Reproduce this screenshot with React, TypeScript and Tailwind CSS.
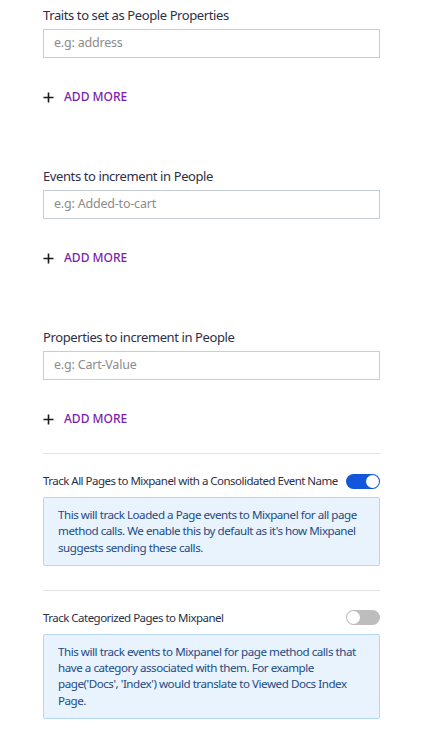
import React from "react";

function Section({ label, placeholder, first }: { label: string; placeholder: string; first?: boolean }) {
  return (
    <div className={first ? "" : "mt-[60px]"}>
      <div className="text-[13px] leading-[18px] tracking-[-0.4px] text-[#2b3049]">{label}</div>
      <div className="mt-[5px] h-[29px] border border-[#c6ced8] bg-white flex items-center px-[10px]">
        <span className="text-[12.5px] tracking-[-0.2px] text-[#8c8c8c]">{placeholder}</span>
      </div>
      <div className="mt-[29px] h-[20px] flex items-center">
        <svg width="11" height="11" viewBox="0 0 11 11" className="mr-[10px]">
          <path d="M5.5 0.5V10.5M0.5 5.5H10.5" stroke="#1a1a1a" strokeWidth="1.6" />
        </svg>
        <span className="text-[12px] font-medium text-[#7a1ea8]">ADD MORE</span>
      </div>
    </div>
  );
}

function Toggle({ on }: { on: boolean }) {
  return (
    <div
      className={
        "relative w-[34px] h-[15px] rounded-full shrink-0 " + (on ? "bg-[#1256db]" : "bg-[#bdbdbd]")
      }
    >
      <div
        className={
          "absolute top-[1px] w-[13px] h-[13px] rounded-full bg-white " +
          (on ? "right-[1px]" : "left-[1px]")
        }
      />
    </div>
  );
}

function ToggleBlock({ label, on, text }: { label: string; on: boolean; text: string }) {
  return (
    <div>
      <div className="h-px bg-[#e2e2e2]" />
      <div className="mt-[17px] h-[20px] flex items-center justify-between">
        <span className="text-[11.5px] tracking-[-0.52px] text-[#2b3049] whitespace-nowrap">{label}</span>
        <Toggle on={on} />
      </div>
      <div className="mt-[6px] border border-[#b6d6f6] bg-[#e8f3fd] rounded-[2px] py-[9px] pl-[14px] pr-[12px] text-[11.6px] tracking-[-0.46px] leading-[16.3px] text-[#1e4a83]">
        {text}
      </div>
    </div>
  );
}

export default function App() {
  return (
    <div
      className="w-[425px] h-[734px] bg-white overflow-hidden"
      style={{ fontFamily: '"Noto Sans", sans-serif' }}
    >
      <div className="ml-[43px] w-[337px] pt-[6px]">
        <Section first label="Traits to set as People Properties" placeholder="e.g: address" />
        <Section label="Events to increment in People" placeholder="e.g: Added-to-cart" />
        <Section label="Properties to increment in People" placeholder="e.g: Cart-Value" />
        <div className="mt-[24px]">
          <ToggleBlock
            label="Track All Pages to Mixpanel with a Consolidated Event Name"
            on={true}
            text="This will track Loaded a Page events to Mixpanel for all page method calls. We enable this by default as it's how Mixpanel suggests sending these calls."
          />
        </div>
        <div className="mt-[24px]">
          <ToggleBlock
            label="Track Categorized Pages to Mixpanel"
            on={false}
            text="This will track events to Mixpanel for page method calls that have a category associated with them. For example page('Docs', 'Index') would translate to Viewed Docs Index Page."
          />
        </div>
      </div>
    </div>
  );
}
